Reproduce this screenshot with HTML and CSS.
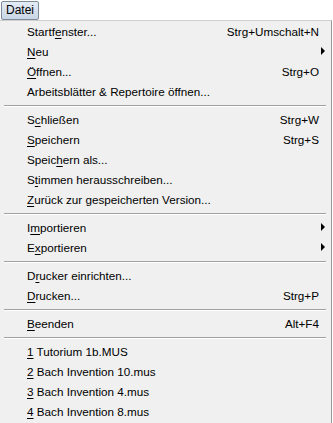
FILE: index.html
```html
<!DOCTYPE html>
<html lang="de">
<head>
    <meta charset="UTF-8">
    <title>Datei</title>
    <link rel="stylesheet" href="styles.css">
</head>
<body>

    <!-- Menu bar -->
    <div class="menubar">
        <span class="menubar-item active">Datei</span>
    </div>

    <!-- Dropdown -->
    <ul class="menu">
        <li class="item"><span>Startf<u>e</u>nster...</span><span class="key">Strg+Umschalt+N</span></li>
        <li class="item"><span><u>N</u>eu</span><span class="arrow"></span></li>
        <li class="item"><span><u>Ö</u>ffnen...</span><span class="key">Strg+O</span></li>
        <li class="item"><span>Arbeitsblätter &amp; Repertoire öffnen...</span></li>
        <li class="sep"></li>
        <li class="item"><span>S<u>c</u>hließen</span><span class="key">Strg+W</span></li>
        <li class="item"><span><u>S</u>peichern</span><span class="key">Strg+S</span></li>
        <li class="item"><span>Speic<u>h</u>ern als...</span></li>
        <li class="item"><span>S<u>t</u>immen herausschreiben...</span></li>
        <li class="item"><span><u>Z</u>urück zur gespeicherten Version...</span></li>
        <li class="sep"></li>
        <li class="item"><span>I<u>m</u>portieren</span><span class="arrow"></span></li>
        <li class="item"><span>E<u>x</u>portieren</span><span class="arrow"></span></li>
        <li class="sep"></li>
        <li class="item"><span>D<u>r</u>ucker einrichten...</span></li>
        <li class="item"><span><u>D</u>rucken...</span><span class="key">Strg+P</span></li>
        <li class="sep"></li>
        <li class="item"><span><u>B</u>eenden</span><span class="key">Alt+F4</span></li>
        <li class="sep"></li>
        <li class="item"><span><u>1</u> Tutorium 1b.MUS</span></li>
        <li class="item"><span><u>2</u> Bach Invention 10.mus</span></li>
        <li class="item"><span><u>3</u> Bach Invention 4.mus</span></li>
        <li class="item"><span><u>4</u> Bach Invention 8.mus</span></li>
    </ul>

</body>
</html>
```

FILE: styles.css
```css
/* Reset */
* {
    margin: 0;
    padding: 0;
    box-sizing: border-box;
}

body {
    font-family: "Liberation Sans", Arial, sans-serif;
    font-size: 11px;
    color: #000;
    background-color: #fff;
    width: 333px;
    height: 423px;
    overflow: hidden;
}

/* Menu bar */
.menubar {
    height: 20px;
    padding: 1px 0 0 1px;
    background-color: #fff;
}

    .menubar-item {
        display: inline-block;
        height: 19px;
        line-height: 17px;
        padding: 0 4px;
        font-size: 12px;
    }

        .menubar-item.active {
            background: linear-gradient(#e4ecf5, #c9d6e6);
            border: 1px solid #7f8a99;
            border-radius: 2px;
        }

/* Dropdown */
.menu {
    list-style: none;
    width: 332px;
    background-color: #f0f0f0;
    border-top: 1px solid #d0d0d0;
    border-right: 1px solid #979797;
    height: 403px;
}

    .menu .item {
        display: flex;
        align-items: center;
        justify-content: space-between;
        height: 20px;
        padding: 0 13px 0 27px;
        font-size: 11.7px;
    }

    .menu .key {
        margin-right: -1px;
    }

    .menu .arrow {
        width: 0;
        height: 0;
        margin-right: -7px;
        border-top: 4px solid transparent;
        border-bottom: 4px solid transparent;
        border-left: 4px solid #000;
    }

    .menu .sep {
        height: 8px;
        margin: 0 5px 0 4px;
        padding-top: 4px;
    }

        .menu .sep::after {
            content: "";
            display: block;
            height: 1px;
            background-color: #a0a0a0;
            border-bottom: 1px solid #fff;
            box-sizing: content-box;
        }

u {
    text-decoration-thickness: 1px;
    text-underline-offset: 2px;
}
```
